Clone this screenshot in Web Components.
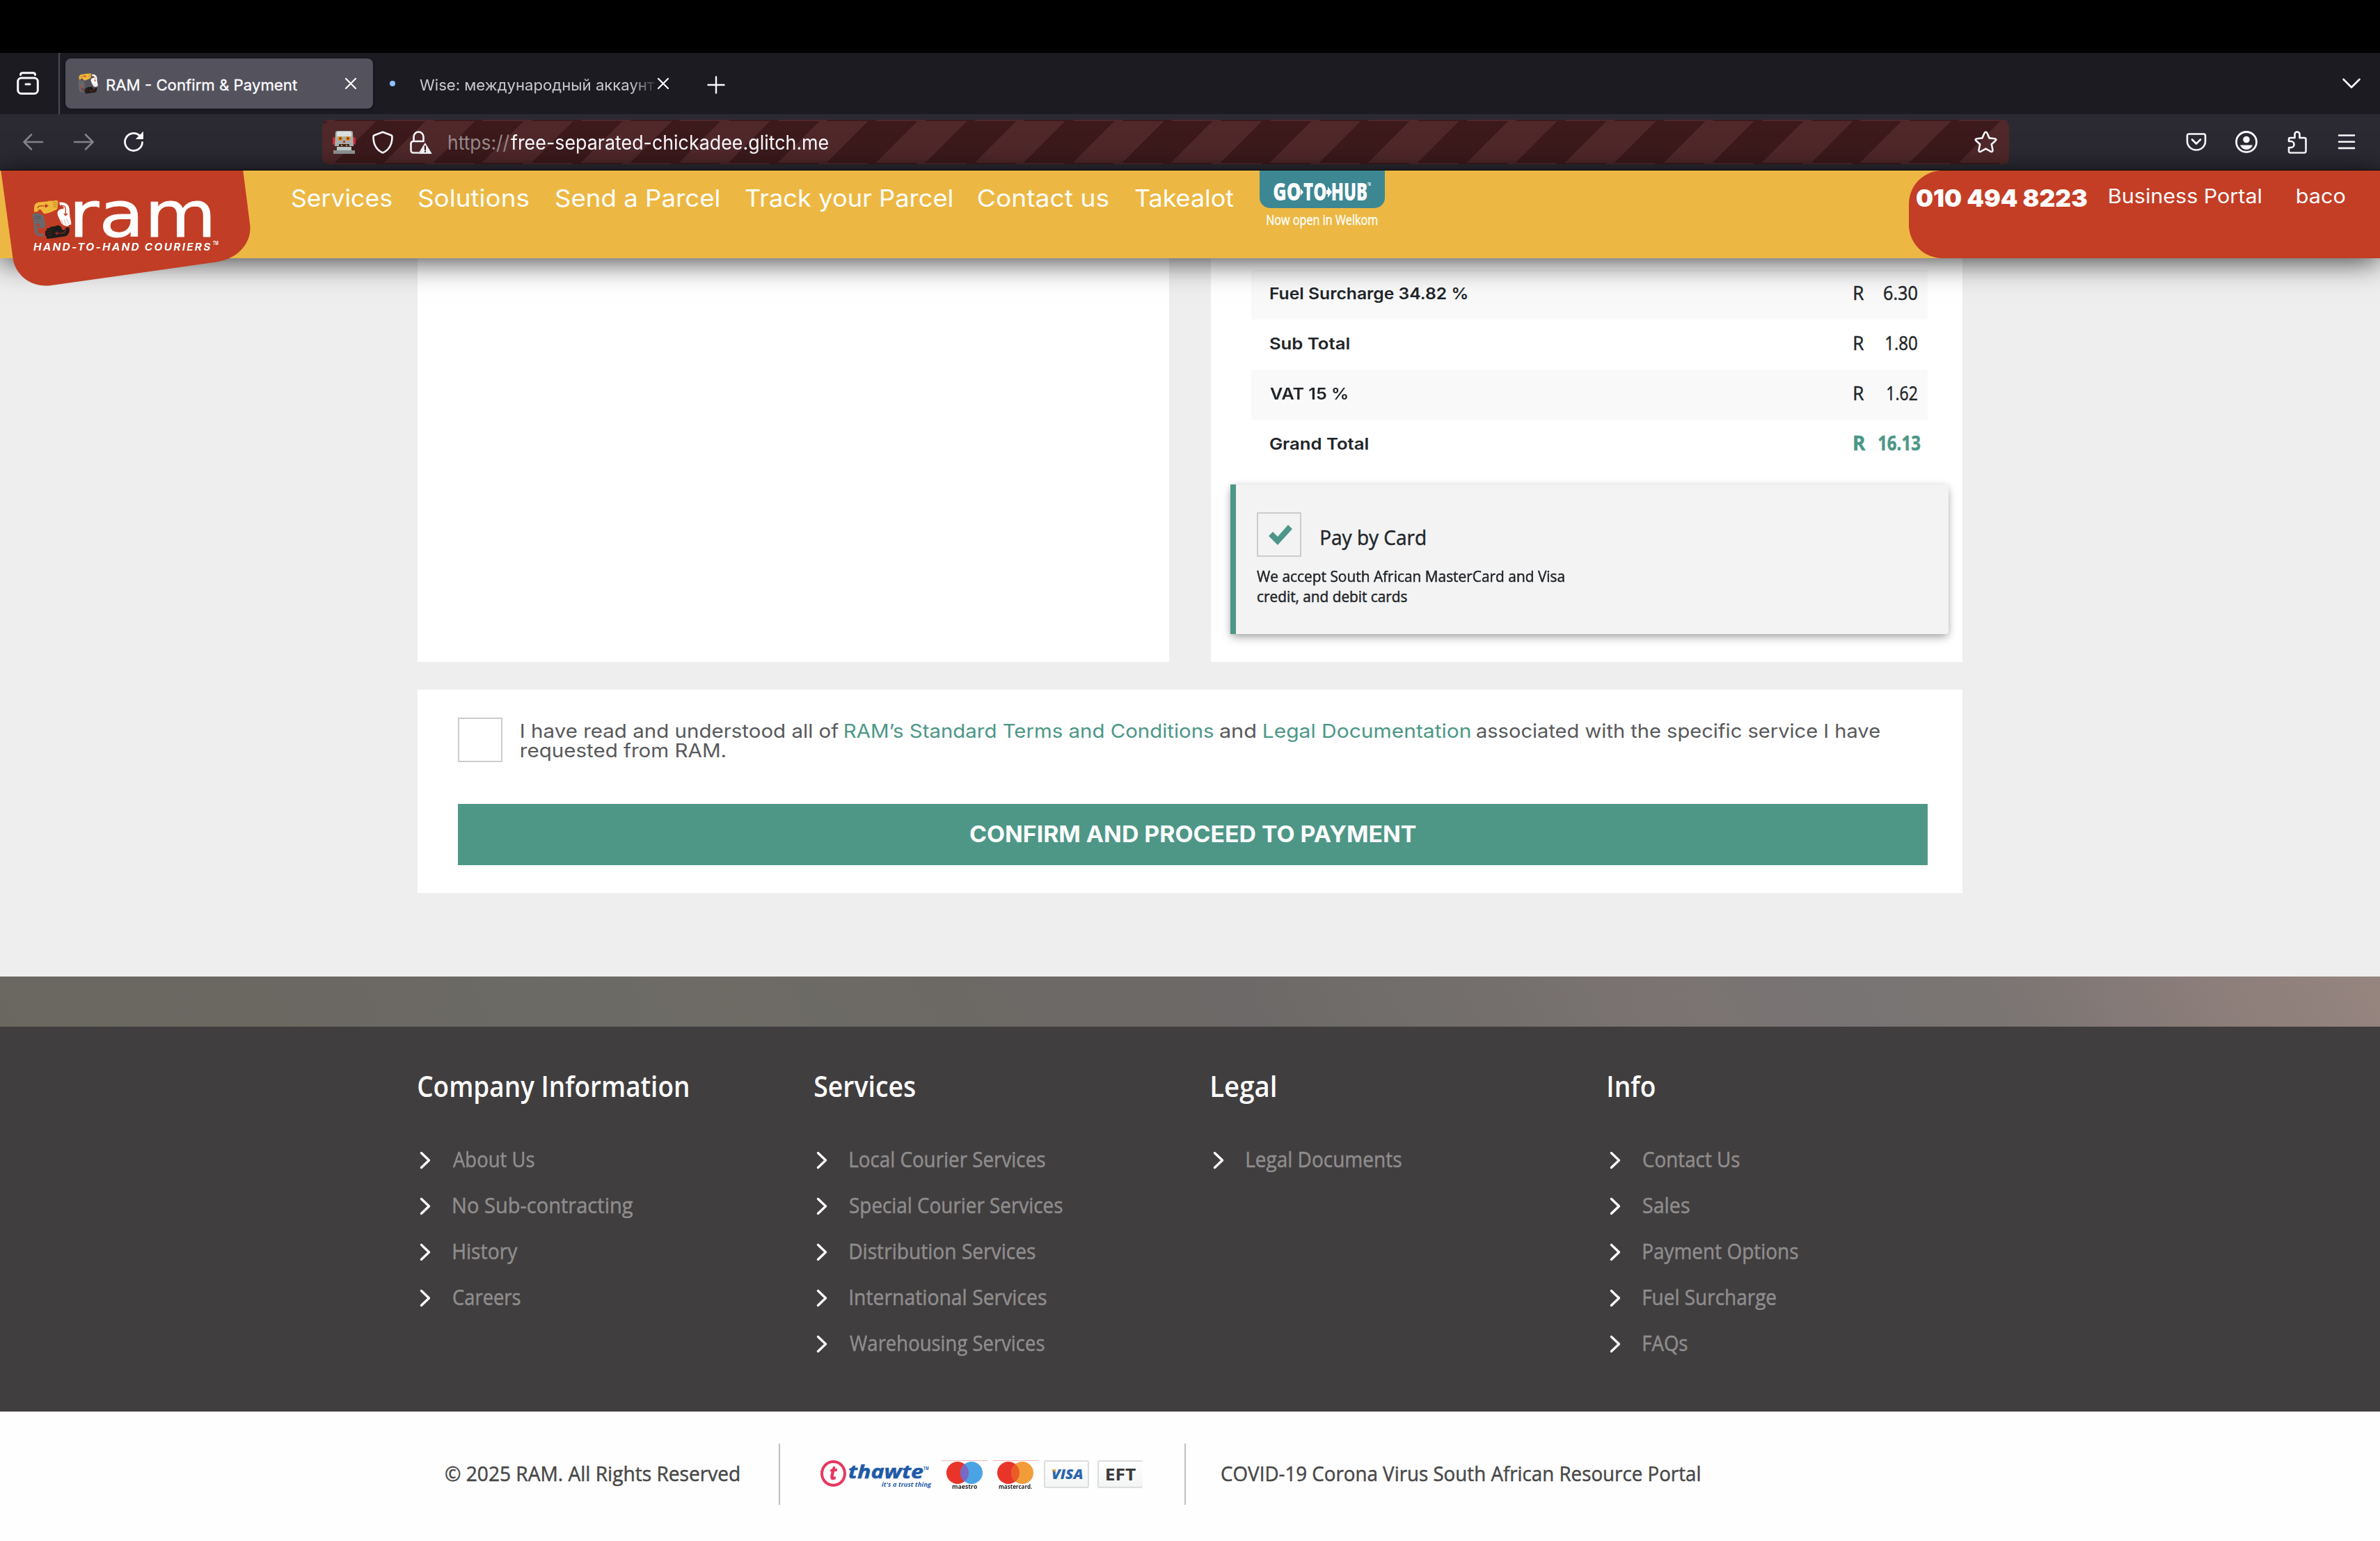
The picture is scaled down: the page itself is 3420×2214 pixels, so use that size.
<!DOCTYPE html>
<html lang="en">
<head>
<meta charset="utf-8">
<title>RAM - Confirm &amp; Payment</title>
<style>
html,body{margin:0;padding:0}
body{width:3420px;height:2214px;overflow:hidden;background:#eee;font-family:Inter,"Noto Sans",sans-serif}
</style>
</head>
<body>
<ram-app></ram-app>
<script>
const SANS = 'Inter,"Noto Sans",sans-serif';

function define(name, html, hook) {
  const t = document.createElement('template');
  t.innerHTML = html;
  customElements.define(name, class extends HTMLElement {
    connectedCallback() {
      if (this.shadowRoot) return;
      this.attachShadow({mode: 'open'}).appendChild(t.content.cloneNode(true));
      if (hook) hook.call(this, this.shadowRoot);
    }
  });
}

/* One run of text whose ink spans exactly the width given in "w". */
const ctx = document.createElement('canvas').getContext('2d');
define('fit-text', `<style>
:host{display:inline-block;white-space:nowrap;flex:none;overflow:visible;text-align:left}
span{display:inline-block;transform-origin:0 50%;white-space:pre}
</style><span><slot></slot></span>`, function (root) {
  const w = parseFloat(this.getAttribute('w'));
  const cs = getComputedStyle(this);
  ctx.font = `${cs.fontStyle} ${cs.fontWeight} ${cs.fontSize} ${cs.fontFamily}`;
  ctx.letterSpacing = cs.letterSpacing === 'normal' ? '0px' : cs.letterSpacing;
  const m = ctx.measureText(this.textContent);
  const ink = m.actualBoundingBoxLeft + m.actualBoundingBoxRight;
  const s = w / ink;
  this.style.width = w + 'px';
  root.querySelector('span').style.transform = `translateX(${m.actualBoundingBoxLeft * s}px) scaleX(${s})`;
});

/* Four linked hands */
define('ram-hands', `<style>:host{display:block;flex:none}svg{display:block;width:100%;height:100%}</style>
<svg viewBox="136 167 171 175" preserveAspectRatio="none" fill="none" stroke-linejoin="round">
<path d="M145 221V202Q145 181 166 178L200 175Q208 171 222 172L244 169Q250 174 248 184L246 204Q243 213 232 214L222 220Q206 226 192 229Q184 228 180 220L176 212Q163 206 161 219Z" fill="#efb83b"/>
<path d="M254 178Q292 176 297 206L299 240L305 268Q305 280 298 277Q290 288 279 281Q268 280 262 269L247 236Q243 216 253 212Q260 206 270 208Q280 198 256 191Z" fill="#fff"/>
<path d="M138 232Q144 224 154 228Q165 224 176 232Q187 236 188 249L194 276Q195 292 182 293L168 290Q158 306 164 314Q172 318 186 316V328Q152 332 146 306L143 272Z" fill="#68696d"/>
<path d="M297 289V305Q294 329 268 330L224 337L203 339Q195 337 199 329Q190 325 194 316Q189 308 198 302Q198 291 209 292Q219 282 232 285L247 279Q262 282 264 294L267 300Q280 302 282 289Z" fill="#1d1c1c"/>
<g stroke="#c23d25" stroke-width="4"><path d="M160 205Q162 194 173 194H199"/><path d="M260 191Q281 193 281 207V228"/><path d="M186 311Q163 309 162 298V280"/></g>
<path d="M193 185L208 194L193 203ZM271 228H291L281 240ZM152 282H172L162 269Z" fill="#c23d25"/>
<path d="M282 297Q279 313 266 315H244" stroke="#8a2c1e" stroke-width="4"/><path d="M247 305L234 315L247 324Z" fill="#8a2c1e"/>
<path d="M226 178L244 181M226 187L245 190M226 196L243 199" stroke="#b87f22" stroke-width="3"/>
<path d="M263 256L270 276M274 254L282 278M285 252L295 274" stroke="#d9a69b" stroke-width="3"/>
<path d="M144 241L175 239M146 250L173 248" stroke="#4f5357" stroke-width="3"/>
<path d="M200 302L222 300M198 313L220 311M202 326L222 322" stroke="#55241d" stroke-width="3"/>
</svg>`);

define('browser-tabs', `<style>
:host{display:flex;height:88px;background:#1c1b22;align-items:center;box-sizing:border-box;color:#fbfbfe;font-size:22px;line-height:30px}
svg{display:block;flex:none}
fit-text{margin-top:3px}
.view{width:84px;display:flex;justify-content:center;box-sizing:border-box;padding-right:5px}
.sep{width:2px;height:88px;background:#4c4b55;margin-right:8px}
.tab{width:442px;height:72px;box-sizing:border-box;border-radius:8px;background:#54525d;display:flex;align-items:center;padding:0 23px 0 18px;box-shadow:0 0 4px rgba(0,0,0,.5);-webkit-text-stroke:.3px #fbfbfe}
.tab ram-hands{width:29px;height:30px;margin-right:12px}
.tab .x{margin-left:auto}
.fade{margin-left:35px;color:#c8c8cc;-webkit-mask-image:linear-gradient(90deg,#000 90%,rgba(0,0,0,.15) 100%);mask-image:linear-gradient(90deg,#000 90%,rgba(0,0,0,.15) 100%)}
.dot{width:8px;height:8px;border-radius:50%;background:#8fc1ff;margin-left:24px}
.chev{margin-left:auto;margin-right:27px}
</style>
<div class="view"><svg width="32" height="34" viewBox="0 0 32 34" fill="none" stroke="#fbfbfe" stroke-width="3" stroke-linecap="round"><path d="M5.5 4.5Q5.5 1.7 8.5 1.7H23.5Q26.5 1.7 26.5 4.5"/><rect x="1.7" y="9" width="28.6" height="22.5" rx="5"/><path d="M13 18H19"/></svg></div>
<div class="sep"></div>
<div class="tab"><ram-hands></ram-hands><fit-text w="274">RAM - Confirm &amp; Payment</fit-text>
<svg class="x" width="18" height="18" viewBox="0 0 18 18" stroke="#fbfbfe" stroke-width="2.2" stroke-linecap="round"><path d="M2 2L16 16M16 2L2 16"/></svg></div>
<div class="dot"></div>
<fit-text class="fade" w="338">Wise: международный аккаунт</fit-text>
<svg style="margin-left:3px" width="18" height="18" viewBox="0 0 18 18" stroke="#fbfbfe" stroke-width="2.2" stroke-linecap="round"><path d="M2 2L16 16M16 2L2 16"/></svg>
<svg style="margin-left:54px;margin-top:3px" width="26" height="26" viewBox="0 0 26 26" stroke="#fbfbfe" stroke-width="2.4" stroke-linecap="round"><path d="M13 1.5V24.5M1.5 13H24.5"/></svg>
<svg class="chev" width="28" height="18" viewBox="0 0 28 18" fill="none" stroke="#fbfbfe" stroke-width="2.6" stroke-linecap="round" stroke-linejoin="round"><path d="M2.5 3L14 14.5L25.5 3"/></svg>`);

define('browser-toolbar', `<style>
:host{display:flex;height:81px;box-sizing:border-box;background:#2b2a33;border-bottom:1px solid #0c0c0d;align-items:center;color:#fbfbfe;font-size:28px;line-height:36px;padding-left:32px}
svg{display:block;flex:none}
fit-text{margin-top:2px}
.url{width:2424px;height:64px;box-sizing:border-box;border:2px solid transparent;border-radius:8px;display:flex;align-items:center;background-image:repeating-linear-gradient(-45deg,#50282a 0 50px,#3c1a1c 50px 100px);background-origin:padding-box;padding:0 15px 0 13px;margin-left:255px}
.dim{color:#998a8e}
.star{margin-left:auto}
</style>
<svg width="32" height="32" viewBox="0 0 32 32" fill="none" stroke="#85848b" stroke-width="2.6" stroke-linecap="round" stroke-linejoin="round"><path d="M13 5.5L2.5 16L13 26.5M2.5 16H29"/></svg>
<svg style="margin-left:40px" width="32" height="32" viewBox="0 0 32 32" fill="none" stroke="#85848b" stroke-width="2.6" stroke-linecap="round" stroke-linejoin="round"><path d="M19 5.5L29.5 16L19 26.5M29.5 16H3"/></svg>
<svg style="margin-left:40px" width="32" height="32" viewBox="0 0 32 32" fill="none" stroke="#fbfbfe" stroke-width="2.8" stroke-linecap="round"><path d="M28.5 16.5A12.5 12.5 0 1 1 24.5 6.8L27 9.5"/><path d="M29.5 2V11.5H20Z" fill="#fbfbfe" stroke-width="1" stroke-linejoin="round"/></svg>
<div class="url">
<svg width="33" height="33" viewBox="0 0 33 33"><rect x="0" y="9" width="4" height="11" rx="2" fill="#cf2b35"/><rect x="29" y="9" width="4" height="11" rx="2" fill="#cf2b35"/><path d="M4 2Q4 0 8 0H25Q29 0 29 2L30 22H3Z" fill="#a9b0b0"/><path d="M6 3Q6 1 9 1H24Q27 1 27 3V8H6Z" fill="#dbe0e0"/><circle cx="11" cy="11" r="3.3" fill="#e58a1c"/><circle cx="22" cy="11" r="3.3" fill="#e58a1c"/><circle cx="11" cy="11" r="1.4" fill="#5a2c0c"/><circle cx="22" cy="11" r="1.4" fill="#5a2c0c"/><path d="M16.500 13L18.500 17H14.500Z" fill="#c22"/><path d="M9 19H24V23H9Z" fill="#3a2b22"/><path d="M12 20H14V22H12ZM19 20H21V22H19Z" fill="#e58a1c"/><path d="M6 23H27V28H6Z" fill="#c5cccc"/><path d="M1 28H32V33H1Z" fill="#8f9696"/></svg>
<svg style="margin-left:24px" width="30" height="33" viewBox="0 0 30 33" fill="none" stroke="#fbfbfe" stroke-width="2.6" stroke-linejoin="round"><path d="M15 1.8L27 6.2Q28.500 6.800 28.500 8.500C28.500 19 24 27.500 15 31.500C6 27.500 1.500 19 1.500 8.500Q1.500 6.800 3 6.200Z"/></svg>
<svg style="margin-left:24px" width="32" height="33" viewBox="0 0 32 33" fill="none" stroke="#fbfbfe" stroke-width="2.6" stroke-linecap="round" stroke-linejoin="round"><path d="M5.500 15V8.500A7 7 0 0 1 19.500 8.500V15M12 31.500H5Q1.500 31.500 1.500 28V18.500Q1.500 15 5 15H19"/><path d="M22 18L31 32.500H13Z" fill="#fbfbfe" stroke-width="1"/><path d="M22 22V27M22 29.500V30" stroke="#3c1a1c" stroke-width="2.2"/></svg>
<fit-text class="dim" w="87" style="margin-left:24px">https://</fit-text><fit-text w="456" style="margin-left:2px">free-separated-chickadee.glitch.me</fit-text>
<svg class="star" width="33" height="32" viewBox="0 0 33 32" fill="none" stroke="#fbfbfe" stroke-width="2.6" stroke-linejoin="round"><path d="M16.500 1.800Q17.800 1.800 18.400 3.200L21.600 10.400L29.400 11.200Q32.500 11.800 30.600 14L24.800 19.200L26.500 27.500Q26.500 31 23.500 29.700L16.500 25.600L9.500 29.700Q6.500 31 6.500 27.500L8.200 19.200L2.400 14Q.5 11.800 3.600 11.200L11.400 10.400L14.600 3.200Q15.200 1.800 16.500 1.800Z"/></svg>
</div>
<svg style="margin-left:254px" width="30" height="28" viewBox="0 0 30 28" fill="none" stroke="#fbfbfe" stroke-width="2.6" stroke-linecap="round" stroke-linejoin="round"><path d="M4.500 2.500H25.500Q28 2.500 28 5V13A13 12.500 0 0 1 2 13V5Q2 2.500 4.500 2.500Z"/><path d="M9 10.500L15 16.500L21 10.500"/></svg>
<svg style="margin-left:41px" width="32" height="32" viewBox="0 0 32 32" fill="#fbfbfe"><circle cx="16" cy="16" r="14.500" fill="none" stroke="#fbfbfe" stroke-width="2.800"/><circle cx="16" cy="12.500" r="4.800"/><path d="M7 20.500H25Q22.500 27 16 27Q9.500 27 7 20.500Z"/></svg>
<svg style="margin-left:43px" width="28" height="33" viewBox="0 0 28 33" fill="none" stroke="#fbfbfe" stroke-width="2.600" stroke-linejoin="round"><path d="M2 15V12Q2 10 4 10H10.500V5A3.500 3.500 0 0 1 17.500 5V10H24Q26.500 10 26.500 12V29Q26.500 31.500 24 31.500H4Q2 31.500 2 29V24H5A4.500 4.500 0 0 0 5 15Z"/></svg>
<svg style="margin-left:44px" width="26" height="24" viewBox="0 0 26 24" stroke="#fbfbfe" stroke-width="2.600" stroke-linecap="round"><path d="M2 2.500H24M2 11.700H24M2 20.900H24"/></svg>`);

define('ram-logo', `<style>
:host{display:block;position:relative;width:419px;height:126px;flex:none;color:#fff}
.plate{position:absolute;left:0;top:0}
.in{position:absolute;left:46px;top:42px;display:flex;align-items:flex-start}
ram-hands{width:57px;height:57px}
.ram{font:400 91px/56px "DejaVu Sans",sans-serif;margin:-6px 0 0 5px;-webkit-text-stroke:.8px #fff}
.tag{position:absolute;left:48px;top:101px;font:italic 700 14.500px/17px Inter,sans-serif;letter-spacing:2px}
.tm{position:absolute;left:306px;top:99px;font:700 7px/12px Inter,sans-serif}
</style>
<svg class="plate" width="364" height="168" viewBox="0 0 364 168"><path d="M1.300 0L18.500 126C22 150 44 168 72 165.300L310 131.500C340 128 361 106 359.500 80L349.300 0Z" fill="#c23d25"/></svg>
<div class="in"><ram-hands></ram-hands><fit-text class="ram" w="194">ram</fit-text></div>
<fit-text class="tag" w="255">HAND-TO-HAND COURIERS</fit-text><fit-text class="tm" w="8">TM</fit-text>`);

define('hub-badge', `<style>
:host{display:block;width:180px;margin-left:37px;color:#fff;flex:none;position:relative}
.b{height:54px;background:#3d8793;border-radius:0 0 15px 15px;display:flex;justify-content:flex-start;padding-left:20px;box-sizing:border-box;padding-top:10px;font:800 35px/40px "Open Sans",sans-serif}
svg{display:block;flex:none;margin-top:9px}
.tm{font:700 6px/8px Inter,sans-serif;margin-top:6px;margin-left:1px}
.s{display:block;font:400 20px/26px "Open Sans","Noto Sans",sans-serif;margin:4px 0 0 10px;-webkit-text-stroke:.4px #fff}
</style>
<div class="b"><fit-text w="39">GO</fit-text><svg width="4" height="22" viewBox="0 0 4 20"><path d="M0 6L4 11L0 16Z" fill="#fff"/></svg><fit-text w="33">TO</fit-text><svg width="8" height="22" viewBox="0 0 8 20"><path d="M0 8H2V3L8 11L2 19V14H0Z" fill="#fff"/></svg><fit-text w="50">HUB</fit-text><fit-text class="tm" w="5">TM</fit-text></div>
<fit-text class="s" w="159">Now open in Welkom</fit-text>`);

define('site-header', `<style>
:host{display:flex;height:126px;background:#ecb843;box-shadow:0 4px 40px rgba(0,0,0,.76);position:relative;z-index:2;color:#fff;font-size:34px;line-height:44px}
nav{display:flex;gap:38px;padding-top:18px;height:44px}
.r{margin-left:auto;width:677px;height:126px;box-sizing:border-box;background:#c43d25;border-radius:48px 0 0 48px;display:flex;padding:18px 0 0 11px;font-size:28px}
.ph{font-size:34px;font-weight:900}
</style>
<ram-logo></ram-logo>
<nav><fit-text w="144">Services</fit-text><fit-text w="159">Solutions</fit-text><fit-text w="235">Send a Parcel</fit-text><fit-text w="297">Track your Parcel</fit-text><fit-text w="187">Contact us</fit-text><fit-text w="142">Takealot</fit-text></nav>
<hub-badge></hub-badge>
<div class="r"><fit-text class="ph" w="245">010 494 8223</fit-text><fit-text w="218" style="margin:-3px 0 0 32px">Business Portal</fit-text><fit-text w="69" style="margin:-3px 0 0 52px">baco</fit-text></div>`);

define('check-box', `<style>
:host{display:flex;width:64px;height:64px;box-sizing:border-box;border:2px solid #ccc;align-items:center;justify-content:center;flex:none}
svg{display:none;margin:0 0 0 3px}
:host([checked]) svg{display:block}
</style><svg width="36" height="31" viewBox="0 0 36 31"><path d="M1 17L7 11L14 18L29 1L35 7L14 30Z" fill="#4c9787"/></svg>`);

define('price-row', `<style>
:host{display:flex;height:72px;box-sizing:border-box;align-items:center;padding:0 15px 2px 27px;background:#fff;color:#212529;font-size:23px;font-weight:600;line-height:32px}
:host([odd]){background:#f9f9f9}
.a{margin-left:auto;width:91px;display:flex;justify-content:space-between;font:500 28px/36px "Open Sans","Noto Sans",sans-serif;margin-top:-5px;-webkit-text-stroke:.5px #212529}
:host([total]){padding-right:11px}
:host([total]) .a{width:95px;font-weight:700;color:#4c9787;-webkit-text-stroke:.5px #4c9787}
</style><fit-text class="l"></fit-text><div class="a"><fit-text class="r">R</fit-text><fit-text class="v"></fit-text></div>`, function (root) {
  const total = this.hasAttribute('total');
  const put = (sel, text, w) => {
    const old = root.querySelector(sel), el = document.createElement('fit-text');
    el.className = old.className; el.setAttribute('w', w); el.textContent = text;
    old.replaceWith(el);
  };
  put('.l', this.getAttribute('label'), this.getAttribute('lw'));
  put('.r', 'R', total ? 17 : 14);
  put('.v', this.getAttribute('value'), this.getAttribute('vw'));
});

define('pay-option', `<style>
:host{display:block;box-sizing:border-box;height:215px;margin:21px 20px 0 28px;border-left:8px solid #4e9787;border-radius:0 4px 4px 0;background:#f3f3f3;box-shadow:0 6px 14px -2px rgba(0,0,0,.35),0 0 10px rgba(0,0,0,.1);padding:40px 0 0 30px;color:#212529;font:500 30px/40px "Open Sans","Noto Sans",sans-serif;-webkit-text-stroke:.5px #212529}
.t{display:flex}
.t fit-text{margin:16px 0 0 28px}
.n{font-size:22px;line-height:29px;margin-top:13px}
.n fit-text{display:block}
</style><div class="t"><check-box checked></check-box><fit-text w="150">Pay by Card</fit-text></div>
<div class="n"><fit-text w="442">We accept South African MasterCard and Visa</fit-text><fit-text w="215" style="margin-left:1px">credit, and debit cards</fit-text></div>`);

define('order-panels', `<style>
:host{display:flex;gap:60px;height:580px;padding:0 600px}
.c{flex:1;background:#fff;box-sizing:border-box}
.rows{padding:16px 50px 0 58px}
</style><div class="c"></div><div class="c"><div class="rows">
<price-row odd label="Fuel Surcharge 34.82 %" lw="283" value="6.30" vw="48"></price-row>
<price-row label="Sub Total" lw="114" value="1.80" vw="45"></price-row>
<price-row odd label="VAT 15 %" lw="111" value="1.62" vw="43"></price-row>
<price-row total label="Grand Total" lw="141" value="16.13" vw="60"></price-row>
</div><pay-option></pay-option></div>`);

define('terms-panel', `<style>
:host{display:block;box-sizing:border-box;margin:40px 600px 0;height:292px;background:#fff;padding:40px 50px 0 58px;color:#58595b;font-size:27.500px;line-height:28px}
.t{display:flex;height:64px;align-items:flex-start}
.p{margin:5px 0 0 27px}
.l{display:flex;gap:9px;height:28px}
a{color:#4c9787;display:flex}
button{display:flex;width:100%;height:88px;margin:60px 0 0;padding:0;border:0;background:#4e9787;color:#fff;align-items:center;justify-content:center;font:700 32px/40px Inter,sans-serif}
</style><div class="t"><check-box></check-box><div class="p">
<div class="l"><fit-text w="456">I have read and understood all of</fit-text><a><fit-text w="530">RAM’s Standard Terms and Conditions</fit-text></a><fit-text w="51">and</fit-text><a style="margin-left:3px"><fit-text w="297">Legal Documentation</fit-text></a><fit-text w="579">associated with the specific service I have</fit-text></div>
<div class="l"><fit-text w="293">requested from RAM.</fit-text></div></div></div>
<button><fit-text w="641">CONFIRM AND PROCEED TO PAYMENT</fit-text></button>`);

define('footer-column', `<style>
:host{display:block;width:570px;flex:none;color:#fff;font-family:"Open Sans","Noto Sans",sans-serif}
h3{margin:0 0 43px;font-weight:600;font-size:42px;line-height:60px;height:60px}
h3 fit-text{margin-left:1px}
.k{display:flex;align-items:center;height:66px;color:#8f8d8e;font-size:30.500px;font-weight:500;line-height:40px;-webkit-text-stroke:.5px #8f8d8e}
svg{display:block;margin:1px 31px 0 3px;flex:none}
fit-text{margin-top:-3px}
</style><h3></h3><div class="ks"></div>`, function (root) {
  const fit = (t, w) => { const e = document.createElement('fit-text'); e.setAttribute('w', w); e.textContent = t; return e; };
  const [title, tw] = this.getAttribute('heading').split('|');
  root.querySelector('h3').appendChild(fit(title, tw));
  for (const item of this.getAttribute('links').split(';')) {
    const [t, w] = item.split('|');
    const d = document.createElement('div');
    d.className = 'k';
    d.innerHTML = '<svg width="17" height="26" viewBox="0 0 17 26" fill="none" stroke="#fff" stroke-width="3.400" stroke-linecap="round" stroke-linejoin="round"><path d="M2.500 2.500L13.500 13L2.500 23.500"/></svg>';
    root.querySelector('.ks').appendChild(d);
    d.appendChild(fit(t, w));
  }
});

define('pay-badges', `<style>
:host{display:flex;height:40px;width:463px;align-items:flex-start;flex:none}
svg{display:block;flex:none}
.o{width:37px;height:38px;box-sizing:border-box;border:4.500px solid #e8365f;border-radius:50%;display:flex;align-items:center;justify-content:center;color:#e8365f;font:italic 800 28px/28px "Open Sans",sans-serif;flex:none}
.o fit-text{margin-top:-4px}
.th{display:flex;flex-direction:column;width:122px;margin-left:4px;color:#2059a8}
.th1{display:flex;height:30px}
.n{font:italic 700 27px/30px "Open Sans",sans-serif;margin-top:1px;-webkit-text-stroke:.5px #2059a8}
.tm{font:700 6px/10px Inter,sans-serif;margin-top:7px}
.n2{display:block;font:italic 700 9.500px/9px "Open Sans",sans-serif;margin-left:47px}
.c{width:66px;height:40px;border-top:1px solid #f4b4b8;box-sizing:border-box;display:flex;flex-direction:column;align-items:center;font:700 8.500px/7px "Open Sans",sans-serif;color:#222}
.c fit-text{display:block;height:7px}
.bx{height:40px;box-sizing:border-box;width:65px;background:linear-gradient(#fff,#f3f4f4);border:2px solid #dcdedd;border-radius:3px;display:flex;align-items:center;justify-content:center}
.visa{font:italic 800 20px/24px "Open Sans",sans-serif;color:#2b65ad}
.eft{font:700 23px/26px "Open Sans",sans-serif;color:#3b3b3b}
</style>
<div class="o"><fit-text w="12">t</fit-text></div>
<div class="th"><div class="th1"><fit-text class="n" w="107">thawte</fit-text><fit-text class="tm" w="8">TM</fit-text></div><fit-text class="n2" w="72">it's a trust thing</fit-text></div>
<div class="c" style="margin-left:11px"><svg width="54" height="33" viewBox="0 0 54 33"><circle cx="17" cy="17" r="16" fill="#e9342a"/><circle cx="37" cy="17" r="16" fill="#4aa3e4"/><path d="M27 4.500A16 16 0 0 1 27 29.500A16 16 0 0 1 27 4.500Z" fill="#7a68c2"/></svg><fit-text w="36">maestro</fit-text></div>
<div class="c" style="margin-left:8px"><svg width="54" height="33" viewBox="0 0 54 33"><circle cx="17" cy="17" r="16" fill="#e9342a"/><circle cx="37" cy="17" r="16" fill="#f29c38"/><path d="M27 4.500A16 16 0 0 1 27 29.500A16 16 0 0 1 27 4.500Z" fill="#ea5b26"/></svg><fit-text w="48">mastercard.</fit-text></div>
<div class="bx" style="margin-left:8px"><svg width="7" height="5" viewBox="0 0 7 5" style="margin:-10px -6px 0 2px;z-index:1"><path d="M0 0H5L7 5Z" fill="#f2a93b"/></svg><fit-text class="visa" w="44">VISA</fit-text></div>
<div class="bx" style="margin-left:12px;border-right:0"><fit-text class="eft" w="42">EFT</fit-text></div>`);

define('site-footer', `<style>
:host{display:block;margin-top:120px}
.g{height:72px;background:linear-gradient(63deg,#696760 0%,#6b6862 12%,#6c6a65 22%,#6d6b64 31%,#6c6966 43%,#6c6968 52%,#726e6b 60%,#7a7372 70%,#777473 78%,#7b7573 84%,#8b7d79 92%,#96857f 100%)}
.f{height:553px;box-sizing:border-box;background:#413e3f;display:flex;padding:55px 0 0 600px}
.b{height:186px;background:#fefefe;display:flex;align-items:flex-start;padding:46px 0 0 640px;box-sizing:border-box;color:#484848;font:500 30px/88px "Open Sans","Noto Sans",sans-serif}
.b>fit-text{margin-top:-1px;-webkit-text-stroke:.5px #484848}
.d{width:2px;height:88px;background:#bebebe;flex:none}
pay-badges{margin:24px 60px 0 58px}
</style><div class="g"></div><div class="f">
<footer-column heading="Company Information|388" links="About Us|117;No Sub-contracting|258;History|93;Careers|97"></footer-column>
<footer-column heading="Services|144" links="Local Courier Services|281;Special Courier Services|306;Distribution Services|267;International Services|283;Warehousing Services|280"></footer-column>
<footer-column heading="Legal|92" links="Legal Documents|223"></footer-column>
<footer-column heading="Info|67" links="Contact Us|139;Sales|67;Payment Options|223;Fuel Surcharge|191;FAQs|64"></footer-column>
</div><div class="b"><fit-text w="422">© 2025 RAM. All Rights Reserved</fit-text><div class="d" style="margin-left:57px"></div><pay-badges></pay-badges><div class="d"></div><fit-text w="688" style="margin-left:51px">COVID-19 Corona Virus South African Resource Portal</fit-text></div>`);

define('ram-app', `<style>:host{display:block;width:3420px;height:2214px;overflow:hidden;background:#eee;font-family:${SANS}}
.top{height:76px;background:#000}</style>
<div class="top"></div><browser-tabs></browser-tabs><browser-toolbar></browser-toolbar>
<site-header></site-header><order-panels></order-panels><terms-panel></terms-panel><site-footer></site-footer>`);
</script>
</body>
</html>
